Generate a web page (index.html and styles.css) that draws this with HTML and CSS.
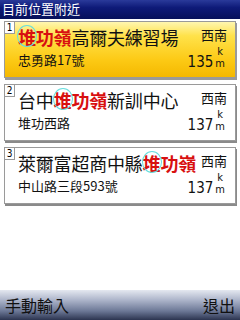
FILE: index.html
```html
<!DOCTYPE html>
<html>
<head>
<meta charset="utf-8">
<link rel="stylesheet" href="styles.css">
</head>
<body>
<div class="screen">
  <div class="header">目前位置附近</div>
  <div class="list">
    <div class="card selected">
      <div class="num">1</div>
      <div class="main">
        <div class="title"><span class="hit"><span class="ring"></span>堆</span><span class="red">功嶺</span>高爾夫練習場</div>
        <div class="addr">忠勇路17號</div>
      </div>
      <div class="side">
        <div class="dir">西南</div>
        <div class="dist"><span class="val">135</span><span class="unit"><span>k</span><span>m</span></span></div>
      </div>
    </div>
    <div class="card">
      <div class="num">2</div>
      <div class="main">
        <div class="title">台中<span class="hit"><span class="ring"></span>堆</span><span class="red">功嶺</span>新訓中心</div>
        <div class="addr">堆功西路</div>
      </div>
      <div class="side">
        <div class="dir">西南</div>
        <div class="dist"><span class="val">137</span><span class="unit"><span>k</span><span>m</span></span></div>
      </div>
    </div>
    <div class="card">
      <div class="num">3</div>
      <div class="main">
        <div class="title">萊爾富超商中縣<span class="hit"><span class="ring"></span>堆</span><span class="red">功嶺</span></div>
        <div class="addr">中山路三段593號</div>
      </div>
      <div class="side">
        <div class="dir">西南</div>
        <div class="dist"><span class="val">137</span><span class="unit"><span>k</span><span>m</span></span></div>
      </div>
    </div>
  </div>
  <div class="footer">
    <span class="btn">手動輸入</span>
    <span class="btn">退出</span>
  </div>
</div>
</body>
</html>
```
FILE: styles.css
```css
html, body {
  margin: 0;
  padding: 0;
  background: #ffffff;
}
.screen {
  width: 240px;
  height: 320px;
  display: flex;
  flex-direction: column;
  font-family: "Noto Sans CJK TC", "Noto Sans", sans-serif;
  overflow: hidden;
}
.header {
  height: 19px;
  line-height: 18px;
  padding-left: 2px;
  color: #ffffff;
  font-size: 13px;
  background: linear-gradient(#2a3a9a 0%, #0e1a78 40%, #06105a 100%);
}
.list {
  flex: 1;
  display: flex;
  flex-direction: column;
  gap: 6px;
  padding: 2px 4px 0 4px;
}
.card {
  height: 55px;
  display: flex;
  border: 1px solid #9a9a9a;
  background: #ffffff;
  box-shadow: 1px 2px 0 #8a8a8a;
}
.card.selected {
  background: linear-gradient(#fff6b0 0%, #ffe24a 25%, #fcc914 70%, #f4b800 100%);
  box-shadow: 1px 2px 0 #9a9a9a;
}
.num {
  width: 9px;
  height: 11px;
  border-right: 1px solid #9a9a9a;
  border-bottom: 1px solid #9a9a9a;
  background: #ffffff;
  font-family: "DejaVu Sans Condensed", "DejaVu Sans", sans-serif;
  font-size: 10px;
  line-height: 12px;
  text-align: center;
  color: #000;
  flex: none;
}
.main {
  flex: 1;
  min-width: 0;
  padding-left: 3px;
  display: flex;
  flex-direction: column;
  white-space: nowrap;
}
.title {
  margin-top: 3px;
  font-size: 18px;
  line-height: 24px;
  color: #111;
  letter-spacing: -0.2px;
}
.red {
  color: #d81010;
  font-weight: bold;
}
.hit {
  position: relative;
  color: #d81010;
  font-weight: bold;
}
.ring {
  position: absolute;
  left: -1px;
  top: 1px;
  width: 18px;
  height: 20px;
  border: 1px solid #66dddd;
  border-radius: 50%;
}
.addr {
  margin-top: 3px;
  font-size: 13px;
  line-height: 16px;
  color: #111;
}
.side {
  flex: none;
  width: 44px;
  padding-right: 8px;
  display: flex;
  flex-direction: column;
  align-items: flex-end;
}
.dir {
  margin-top: 5px;
  font-size: 13px;
  line-height: 16px;
  color: #111;
}
.dist {
  margin-top: 3px;
  display: flex;
  align-items: flex-end;
  color: #111;
  font-family: "DejaVu Sans Condensed", "DejaVu Sans", sans-serif;
}
.val {
  font-size: 15px;
  line-height: 16px;
}
.unit {
  display: flex;
  flex-direction: column;
  align-items: center;
  font-size: 11px;
  line-height: 12px;
  margin-left: 2px;
  margin-right: 2px;
}
.footer {
  height: 30px;
  display: flex;
  justify-content: space-between;
  align-items: center;
  padding: 0 5px;
  background: linear-gradient(#e4e8f0 0%, #aab2c8 35%, #6c7896 70%, #2c3450 100%);
}
.btn {
  font-size: 16px;
  color: #101010;
  line-height: 20px;
}
```
